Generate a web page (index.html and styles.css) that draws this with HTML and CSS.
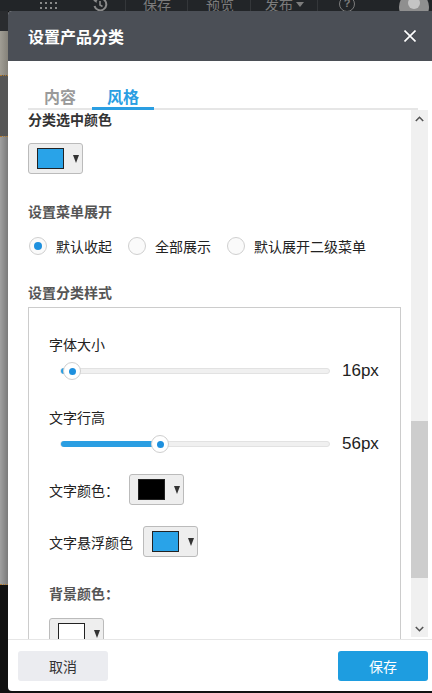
FILE: index.html
```html
<!DOCTYPE html>
<html lang="zh-CN">
<head>
<meta charset="utf-8">
<title>设置产品分类</title>
<link rel="stylesheet" href="styles.css">
</head>
<body>
<div class="topbar">
  <div class="tb-inner">
    <span class="tb-grid"><svg width="17" height="10" viewBox="0 0 17 10"><g fill="#8a8a8a"><rect x="0" y="1" width="2" height="2"/><rect x="5" y="1" width="2" height="2"/><rect x="10" y="1" width="2" height="2"/><rect x="15" y="1" width="2" height="2"/><rect x="0" y="6" width="2" height="2"/><rect x="5" y="6" width="2" height="2"/><rect x="10" y="6" width="2" height="2"/><rect x="15" y="6" width="2" height="2"/></g></svg></span>
    <span class="tb-undo"><svg width="16" height="16" viewBox="0 0 16 16"><path d="M3 5.5 A6 6 0 1 1 2.5 10" fill="none" stroke="#8a8a8a" stroke-width="2"/><path d="M8 5v4l2.5 1.5" fill="none" stroke="#8a8a8a" stroke-width="1.6"/><path d="M0.5 3.5 L4.5 7 L5 2 Z" fill="#8a8a8a"/></svg></span>
    <span class="tb-sep s1"></span>
    <span class="tb-text t1">保存</span>
    <span class="tb-sep s2"></span>
    <span class="tb-text t2">预览</span>
    <span class="tb-sep s3"></span>
    <span class="tb-text t3">发布<i class="tb-caret"></i></span>
    <span class="tb-sep s4"></span>
    <span class="tb-help">?</span>
    <span class="tb-avatar"><svg width="30" height="30" viewBox="0 0 30 30"><circle cx="15" cy="15" r="15" fill="#8f8f8f"/><circle cx="15" cy="11" r="6" fill="#c4c4c4"/><path d="M4 26 C7 18 23 18 26 26 Z" fill="#c4c4c4"/></svg></span>
  </div>
</div>
<div class="main">
  <div class="side">
    <div class="sd sd1"></div>
    <div class="sd sd2"></div>
    <div class="sd sd3"></div>
    <div class="sd sd4"></div>
    <div class="sd sd5"></div>
  </div>
  <div class="modal">
    <div class="m-head">
      <h1 class="m-title">设置产品分类</h1>
      <span class="m-close"><svg width="12" height="12" viewBox="0 0 12 12"><path d="M0.5 0.5 L11.5 11.5 M11.5 0.5 L0.5 11.5" stroke="#fff" stroke-width="1.6"/></svg></span>
    </div>
    <div class="tabs">
      <span class="tab">内容</span>
      <span class="tab active">风格</span>
    </div>
    <div class="scroll">
      <div class="content">
        <div class="h h-first">分类选中颜色</div>
        <div class="picker p-top"><span class="swatch blue"></span><i class="arrow"></i></div>

        <div class="h h-menu">设置菜单展开</div>
        <div class="radios">
          <label class="radio"><span class="dot checked"></span><span class="rl">默认收起</span></label>
          <label class="radio"><span class="dot"></span><span class="rl">全部展示</span></label>
          <label class="radio"><span class="dot"></span><span class="rl">默认展开二级菜单</span></label>
        </div>

        <div class="h h-style">设置分类样式</div>
        <div class="box">
          <div class="lbl l-size">字体大小</div>
          <div class="slider-row">
            <div class="track"><div class="fill" style="width:11px"></div><span class="knob"></span></div>
            <span class="val">16px</span>
          </div>
          <div class="lbl l-line">文字行高</div>
          <div class="slider-row">
            <div class="track"><div class="fill" style="width:99px"></div><span class="knob"></span></div>
            <span class="val">56px</span>
          </div>
          <div class="crow c1">
            <span class="clbl w80">文字颜色：</span>
            <div class="picker"><span class="swatch black"></span><i class="arrow"></i></div>
          </div>
          <div class="crow c2">
            <span class="clbl w94">文字悬浮颜色</span>
            <div class="picker"><span class="swatch blue"></span><i class="arrow"></i></div>
          </div>
          <div class="h h-bg">背景颜色：</div>
          <div class="picker p-bg"><span class="swatch white"></span><i class="arrow"></i></div>
        </div>
      </div>
      <div class="sbar">
        <div class="sb-btn"><svg width="9" height="6" viewBox="0 0 9 6"><path d="M0.8 5 L4.5 1.3 L8.2 5" fill="none" stroke="#555" stroke-width="1.6"/></svg></div>
        <div class="sb-track"><div class="sb-thumb"></div></div>
        <div class="sb-btn"><svg width="9" height="6" viewBox="0 0 9 6"><path d="M0.8 1 L4.5 4.7 L8.2 1" fill="none" stroke="#555" stroke-width="1.6"/></svg></div>
      </div>
    </div>
    <div class="foot">
      <button class="btn cancel">取消</button>
      <button class="btn save">保存</button>
    </div>
  </div>
</div>
</body>
</html>
```

FILE: styles.css
```css
* { box-sizing: border-box; }
html, body { margin: 0; padding: 0; }
body {
  width: 432px;
  height: 693px;
  overflow: hidden;
  background: #111;
  font-family: "Noto Sans CJK SC", "Noto Sans", sans-serif;
}

/* toolbar behind */
.topbar {
  height: 11px;
  background: #222528;
  overflow: hidden;
}
.tb-inner {
  display: flex;
  align-items: center;
  height: 26px;
  margin-top: -9px;
  color: #7c7c7c;
  font-size: 14px;
  line-height: 18px;
}
.tb-grid { margin-left: 40px; width: 17px; height: 10px; display: flex; margin-top: 4px; }
.tb-undo { margin-left: 35px; width: 16px; height: 16px; display: flex; }
.tb-sep { width: 1px; height: 26px; background: #34373a; }
.s1 { margin-left: 17px; }
.s2 { margin-left: 15px; }
.s3 { margin-left: 15px; }
.s4 { margin-left: 12px; }
.tb-text { width: 29px; display: flex; align-items: center; white-space: nowrap; }
.t1 { margin-left: 17px; }
.t2 { margin-left: 18px; }
.t3 { margin-left: 14px; width: 40px; }
.tb-caret {
  display: inline-block;
  margin-left: 3px;
  border-left: 4px solid transparent;
  border-right: 4px solid transparent;
  border-top: 5px solid #7c7c7c;
}
.tb-help {
  margin-left: 21px;
  width: 16px;
  height: 16px;
  border: 1.5px solid #7c7c7c;
  border-radius: 50%;
  font-size: 11px;
  line-height: 13px;
  text-align: center;
  font-family: "Liberation Sans", sans-serif;
  font-weight: bold;
}
.tb-avatar { margin-left: 44px; width: 30px; height: 30px; display: flex; margin-top: 6px; }

.main { display: flex; height: 682px; }

/* left strip of page behind */
.side { width: 8px; display: flex; flex-direction: column; }
.sd1 { height: 20px; background: #2a2c2f; }
.sd2 { height: 44px; background: linear-gradient(90deg, #a09d94, #85827a); }
.sd3 { height: 61px; background: #565656; border-top: 1px dotted #b07a30; }
.sd4 { height: 449px; background: linear-gradient(90deg, #a0a0a0, #7a7a7a); border-top: 1px dotted #b07a30; border-bottom: 1px dotted #b07a30; }
.sd5 { flex: 1; background: #111; }

/* modal */
.modal {
  width: 424px;
  height: 680px;
  background: #fff;
  border-radius: 4px 0 0 4px;
  display: flex;
  flex-direction: column;
  overflow: hidden;
}
.m-head {
  height: 50px;
  flex: none;
  background: #4b4f56;
  display: flex;
  align-items: center;
  padding-left: 20px;
}
.m-title {
  margin: 0;
  flex: 1;
  color: #fff;
  font-size: 16px;
  font-weight: bold;
  line-height: 22px;
}
.m-close { width: 12px; height: 12px; display: flex; margin-right: 16px; }

.tabs {
  flex: none;
  display: flex;
  height: 49px;
  margin: 0 14px 0 20px;
  border-bottom: 2px solid #e6e6e6;
}
.tab {
  width: 64px;
  text-align: center;
  padding-top: 24px;
  font-size: 16px;
  line-height: 22px;
  font-weight: bold;
  color: #9a9a9a;
}
.tab.active {
  width: 62px;
  color: #2a9ee2;
  border-bottom: 3px solid #2a9ee2;
  margin-bottom: -2px;
}

.scroll {
  flex: none;
  height: 529px;
  display: flex;
  padding-right: 4px;
}
.content {
  flex: 1;
  overflow: hidden;
  padding-left: 20px;
}
.h {
  font-size: 14px;
  line-height: 18px;
  font-weight: bold;
  color: #555;
}
.h-first { color: #333; }
.h-menu { margin-top: 28px; }
.h-style { margin-top: 28px; }

.picker {
  width: 55px;
  height: 31px;
  background: #eee;
  border: 1px solid #bbb;
  border-radius: 3px;
  display: flex;
  align-items: center;
  padding-left: 8px;
}
.p-top { margin-top: 15px; }
.swatch {
  width: 27px;
  height: 21px;
  border: 1px solid #222;
}
.swatch.blue { background: #29a3e8; }
.swatch.black { background: #000; }
.swatch.white { background: #fff; }
.arrow {
  margin-left: 9px;
  border-left: 3.5px solid transparent;
  border-right: 3.5px solid transparent;
  border-top: 8px solid #333;
}

.radios {
  display: flex;
  margin-top: 17px;
  height: 18px;
  align-items: center;
  gap: 16px;
  padding-left: 1px;
}
.radio { display: flex; align-items: center; }
.dot {
  width: 18px;
  height: 18px;
  border-radius: 50%;
  border: 1px solid #cfcfcf;
  background: #fafafa;
  display: flex;
  align-items: center;
  justify-content: center;
}
.dot.checked::after {
  content: "";
  width: 8px;
  height: 8px;
  border-radius: 50%;
  background: #1e90de;
}
.rl {
  margin-left: 9px;
  font-size: 14px;
  line-height: 18px;
  color: #222;
}

.box {
  margin-top: 6px;
  width: 373px;
  height: 360px;
  border: 1px solid #ccc;
  padding: 27px 0 0 20px;
}
.lbl {
  font-size: 14px;
  line-height: 18px;
  color: #222;
}
.l-line { margin-top: 27px; }
.slider-row {
  margin-top: 8px;
  height: 20px;
  display: flex;
  align-items: center;
  padding-left: 11px;
}
.track {
  width: 270px;
  height: 6px;
  border: 1px solid #e2e2e2;
  background: #f0f0f0;
  border-radius: 3px;
  display: flex;
  align-items: center;
}
.fill {
  height: 6px;
  background: #2a9ee2;
  border-radius: 3px 0 0 3px;
  flex: none;
}
.knob {
  flex: none;
  width: 18px;
  height: 18px;
  margin-left: -9px;
  border-radius: 50%;
  background: #fff;
  border: 1px solid #cfcfcf;
  display: flex;
  align-items: center;
  justify-content: center;
}
.knob::after {
  content: "";
  width: 7px;
  height: 7px;
  border-radius: 50%;
  background: #1e90de;
}
.val {
  margin-left: 12px;
  font-family: "Liberation Sans", sans-serif;
  font-size: 17px;
  line-height: 20px;
  color: #222;
}

.crow {
  display: flex;
  align-items: center;
  margin-top: 20px;
}
.c2 { margin-top: 21px; }
.clbl {
  font-size: 14px;
  line-height: 18px;
  color: #222;
  white-space: nowrap;
}
.w80 { width: 80px; }
.w94 { width: 94px; }
.h-bg { margin-top: 27px; }
.p-bg { margin-top: 16px; }

/* scrollbar */
.sbar {
  width: 17px;
  height: 527px;
  background: #f0f0f0;
  display: flex;
  flex-direction: column;
}
.sb-btn {
  height: 17px;
  flex: none;
  display: flex;
  align-items: center;
  justify-content: center;
}
.sb-track { flex: 1; }
.sb-thumb {
  margin-top: 294px;
  height: 157px;
  background: #cdcdcd;
}

.foot {
  flex: none;
  border-top: 1px solid #e6e6e6;
  padding: 11px 4px 10px 10px;
  display: flex;
  justify-content: space-between;
}
.btn {
  width: 90px;
  height: 30px;
  border: 0;
  border-radius: 3px;
  font-family: "Noto Sans CJK SC", sans-serif;
  font-size: 14px;
  line-height: 30px;
  padding: 0;
}
.cancel { background: #ebecf0; color: #333; }
.save { background: #1e9de0; color: #fff; }
```
